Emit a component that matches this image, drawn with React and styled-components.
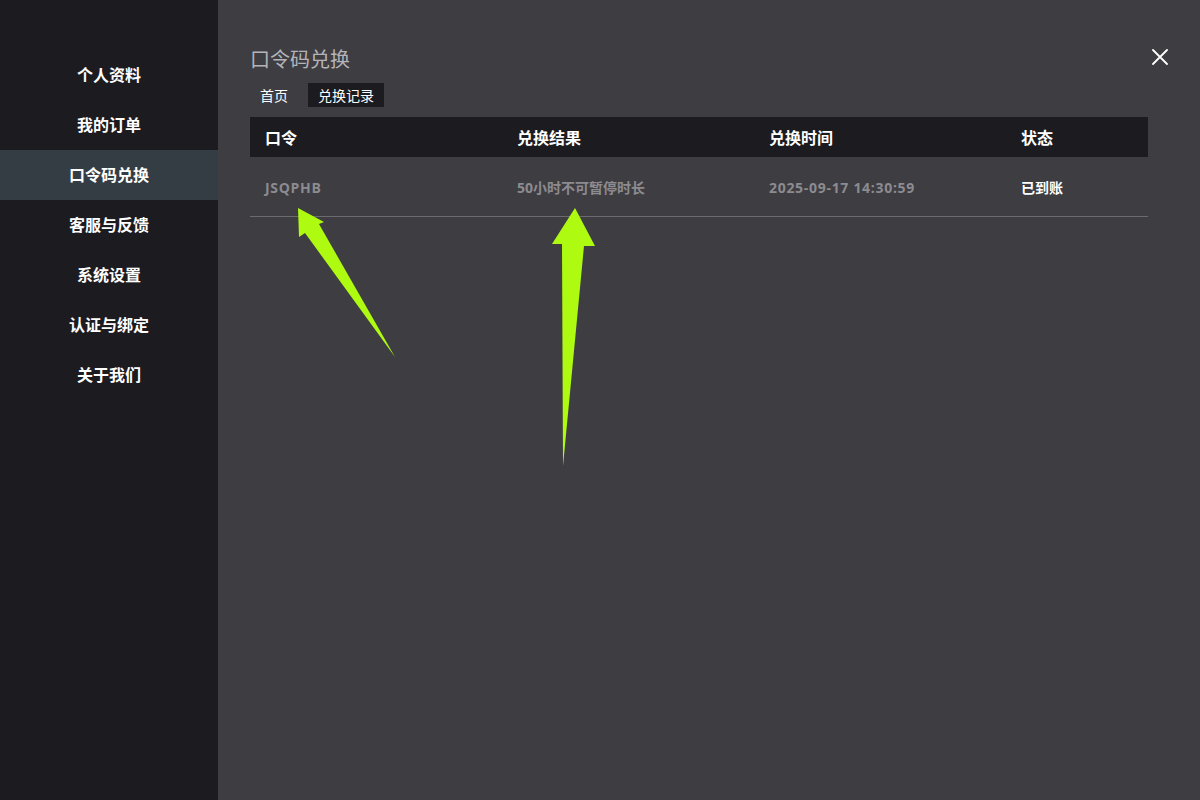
import React from 'react';
import styled, { createGlobalStyle } from 'styled-components';

const GlobalStyle = createGlobalStyle`
  html, body {
    margin: 0;
    padding: 0;
    background: #3e3d42;
    font-family: "Open Sans", "Noto Sans CJK SC", sans-serif;
  }
  #root {
    height: 800px;
  }
`;

const Page = styled.div`
  position: relative;
  display: flex;
  width: 1200px;
  height: 800px;
  overflow: hidden;
`;

const Sidebar = styled.nav`
  width: 218px;
  flex-shrink: 0;
  background-color: #1c1b20;
  padding-top: 50px;
  box-sizing: border-box;
`;

const NavItem = styled.div`
  height: 50px;
  box-sizing: border-box;
  padding-bottom: 2px;
  display: flex;
  align-items: center;
  justify-content: center;
  color: #ffffff;
  font-size: 16px;
  font-weight: 700;
  background-color: ${(p) => (p.$active ? '#353d44' : 'transparent')};
`;

const Main = styled.main`
  flex: 1;
  position: relative;
  padding: 46px 52px 0 32px;
`;

const Title = styled.h1`
  margin: 0;
  font-size: 20px;
  font-weight: 400;
  line-height: 28px;
  color: #b4b4b8;
`;

const Tabs = styled.div`
  display: flex;
  gap: 10px;
  margin-top: 9px;
`;

const Tab = styled.div`
  height: 24px;
  padding: 0 10px;
  display: flex;
  align-items: center;
  font-size: 14px;
  color: #ffffff;
  background-color: ${(p) => (p.$active ? '#1c1b20' : 'transparent')};
`;

const Table = styled.div`
  margin-top: 10px;
  width: 898px;
`;

const Row = styled.div`
  display: grid;
  grid-template-columns: 252px 252px 252px 1fr;
  align-items: center;
  padding-left: 15px;
  height: ${(p) => (p.$head ? '40px' : '59px')};
  background-color: ${(p) => (p.$head ? '#1c1b20' : 'transparent')};
  border-bottom: ${(p) => (p.$head ? 'none' : '1px solid #6b6a6e')};
`;

const HeadCell = styled.div`
  font-size: 16px;
  font-weight: 700;
  color: #ffffff;
  padding-bottom: 1px;
`;

const Cell = styled.div`
  font-size: 14px;
  font-weight: 700;
  letter-spacing: ${(p) => (p.$latin ? '0.7px' : '0')};
  color: ${(p) => (p.$bright ? '#ffffff' : '#8c8b90')};
  padding-top: 1px;
`;

const CloseButton = styled.button`
  position: absolute;
  top: 47px;
  right: 30px;
  width: 20px;
  height: 20px;
  padding: 0;
  border: none;
  background: none;
  cursor: pointer;
  display: flex;
  align-items: center;
  justify-content: center;
`;

const Annotations = styled.svg`
  position: absolute;
  left: 0;
  top: 0;
  pointer-events: none;
`;

const navItems = ['个人资料', '我的订单', '口令码兑换', '客服与反馈', '系统设置', '认证与绑定', '关于我们'];

const App = () => (
  <>
    <GlobalStyle />
    <Page>
      <Sidebar>
        {navItems.map((item) => (
          <NavItem key={item} $active={item === '口令码兑换'}>
            {item}
          </NavItem>
        ))}
      </Sidebar>
      <Main>
        <Title>口令码兑换</Title>
        <Tabs>
          <Tab>首页</Tab>
          <Tab $active>兑换记录</Tab>
        </Tabs>
        <Table>
          <Row $head>
            <HeadCell>口令</HeadCell>
            <HeadCell>兑换结果</HeadCell>
            <HeadCell>兑换时间</HeadCell>
            <HeadCell>状态</HeadCell>
          </Row>
          <Row>
            <Cell $latin>JSQPHB</Cell>
            <Cell>50小时不可暂停时长</Cell>
            <Cell $latin>2025-09-17 14:30:59</Cell>
            <Cell $bright>已到账</Cell>
          </Row>
        </Table>
        <CloseButton aria-label="关闭">
          <svg width="16" height="16" viewBox="0 0 16 16">
            <path d="M1 1 L15 15 M15 1 L1 15" stroke="#ffffff" strokeWidth="1.8" strokeLinecap="round" />
          </svg>
        </CloseButton>
      </Main>
      <Annotations width="1200" height="800" viewBox="0 0 1200 800">
        <polygon
          points="298,208 324,222 319,224 395,357 305,233 299,237"
          fill="#aefa10"
        />
        <polygon
          points="575,208 595,246 584,246 563,466 562,244 552,244"
          fill="#aefa10"
        />
      </Annotations>
    </Page>
  </>
);

export default App;
